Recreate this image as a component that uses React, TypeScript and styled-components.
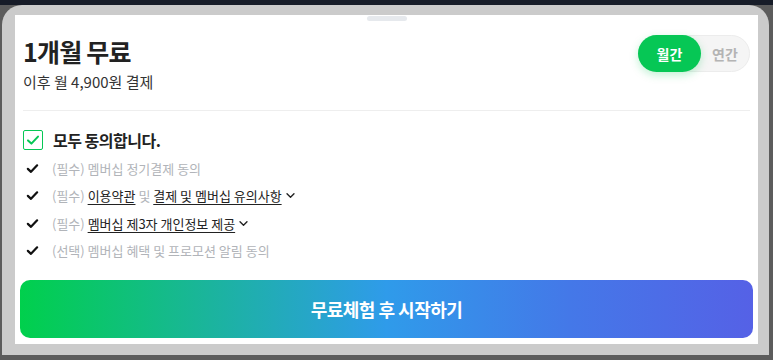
import { createGlobalStyle, styled } from "styled-components";

const GlobalStyle = createGlobalStyle`
  * { box-sizing: border-box; }
  body {
    margin: 0;
    font-family: "Noto Sans CJK KR", "Noto Sans", sans-serif;
    background: #5c5c5c;
  }
`;

const Check = ({ color = "#111", size = 13, width = 2.4 }: { color?: string; size?: number; width?: number }) => (
  <svg width={size} height={size} viewBox="0 0 14 14" fill="none">
    <path d="M2 7.4 L5.4 10.6 L12 3.6" stroke={color} strokeWidth={width} strokeLinecap="round" strokeLinejoin="round" />
  </svg>
);

const Chevron = () => (
  <svg width="11" height="11" viewBox="0 0 12 12" fill="none">
    <path d="M2.2 4.2 L6 8 L9.8 4.2" stroke="#222" strokeWidth="1.5" strokeLinecap="round" strokeLinejoin="round" />
  </svg>
);

type Part = { text: string; link?: boolean };

const items: { parts: Part[]; more?: boolean }[] = [
  { parts: [{ text: "(필수) 멤버십 정기결제 동의" }] },
  {
    parts: [
      { text: "(필수) " },
      { text: "이용약관", link: true },
      { text: " 및 " },
      { text: "결제 및 멤버십 유의사항", link: true },
    ],
    more: true,
  },
  { parts: [{ text: "(필수) " }, { text: "멤버십 제3자 개인정보 제공", link: true }], more: true },
  { parts: [{ text: "(선택) 멤버십 혜택 및 프로모션 알림 동의" }] },
];

export default function App() {
  return (
    <Page>
      <GlobalStyle />
      <TopStrip />
      <Frame>
        <Sheet>
          <Handle />
          <Header>
            <div>
              <Title>1개월 무료</Title>
              <Subtitle>이후 월 4,900원 결제</Subtitle>
            </div>
            <Toggle>
              <ToggleOption $active>월간</ToggleOption>
              <ToggleOption>연간</ToggleOption>
            </Toggle>
          </Header>
          <Divider />
          <AllRow>
            <CheckBox>
              <Check color="#06c755" size={14} width={2} />
            </CheckBox>
            <AllLabel>모두 동의합니다.</AllLabel>
          </AllRow>
          <TermList>
            {items.map((item, i) => (
              <TermItem key={i}>
                <TermCheck>
                  <Check />
                </TermCheck>
                <TermText>
                  {item.parts.map((p, j) =>
                    p.link ? <TermLink key={j}>{p.text}</TermLink> : <span key={j}>{p.text}</span>
                  )}
                </TermText>
                {item.more && <Chevron />}
              </TermItem>
            ))}
          </TermList>
          <StartButton>무료체험 후 시작하기</StartButton>
        </Sheet>
      </Frame>
    </Page>
  );
}

const Page = styled.div`
  width: 773px;
  height: 360px;
  overflow: hidden;
  background: #5c5c5c;
`;

const TopStrip = styled.div`
  height: 5px;
  background: #171c28;
`;

const Frame = styled.div`
  width: 767px;
  height: 350px;
  margin-left: 2px;
  padding: 10px 11px 11px 13px;
  background: #cbcbcb;
  border-radius: 20px 20px 0 0;
`;

const Sheet = styled.div`
  height: 329px;
  background: #ffffff;
  padding: 1px 8px 5px;
  display: flex;
  flex-direction: column;
`;

const Handle = styled.div`
  align-self: center;
  width: 40px;
  height: 5px;
  border-radius: 3px;
  background: #e6e9ed;
`;

const Header = styled.div`
  display: flex;
  justify-content: space-between;
  align-items: flex-start;
  margin-top: 13px;
`;

const Title = styled.h1`
  margin: 0;
  padding-top: 2px;
  font-size: 25px;
  line-height: 30px;
  font-weight: 700;
  letter-spacing: -0.8px;
  color: #222;
`;

const Subtitle = styled.p`
  margin: 6px 0 0;
  font-size: 15px;
  line-height: 20px;
  letter-spacing: 0;
  color: #333;
`;

const Toggle = styled.div`
  display: flex;
  width: 112px;
  height: 37px;
  margin-top: 1px;
  border-radius: 19px;
  background: #f5f5f5;
  border: 1px solid #ececec;
`;

const ToggleOption = styled.div<{ $active?: boolean }>`
  flex: ${({ $active }) => ($active ? "0 0 63px" : "1")};
  margin: -1px 0 -1px ${({ $active }) => ($active ? "-1px" : "0")};
  display: flex;
  align-items: center;
  justify-content: center;
  border-radius: 19px;
  font-size: 14px;
  font-weight: 700;
  color: ${({ $active }) => ($active ? "#fff" : "#b4b4b4")};
  background: ${({ $active }) => ($active ? "#06c755" : "transparent")};
  box-shadow: ${({ $active }) => ($active ? "0 3px 8px rgba(6, 199, 85, 0.25)" : "none")};
`;

const Divider = styled.hr`
  margin: 18px 0 0;
  border: 0;
  height: 1px;
  background: #eeeeee;
`;

const AllRow = styled.div`
  display: flex;
  align-items: center;
  gap: 10px;
  margin-top: 19px;
  height: 20px;
`;

const CheckBox = styled.span`
  width: 20px;
  height: 20px;
  border: 1px solid #06c755;
  border-radius: 2px;
  display: flex;
  align-items: center;
  justify-content: center;
`;

const AllLabel = styled.span`
  font-size: 16px;
  font-weight: 700;
  letter-spacing: -0.5px;
  color: #222;
`;

const TermList = styled.ul`
  list-style: none;
  margin: 5px 0 0;
  padding: 0;
`;

const TermItem = styled.li`
  display: flex;
  align-items: center;
  height: 27.3px;
  gap: 3px;
`;

const TermCheck = styled.span`
  width: 26px;
  padding-left: 3px;
  display: flex;
  align-items: center;
`;

const TermText = styled.span`
  font-size: 13px;
  letter-spacing: 0;
  color: #b1b4b9;
`;

const TermLink = styled.span`
  color: #222;
  text-decoration: underline;
  text-underline-offset: 3px;
`;

const StartButton = styled.button`
  margin: 16px -3px 0;
  height: 58px;
  border: 0;
  border-radius: 10px;
  background: linear-gradient(90deg, #00d04c 0%, #1ab59a 25%, #2f9bea 50%, #4478e8 75%, #5561e6 100%);
  color: #fff;
  font-family: inherit;
  font-size: 18px;
  font-weight: 700;
  letter-spacing: -0.5px;
  cursor: pointer;
`;
